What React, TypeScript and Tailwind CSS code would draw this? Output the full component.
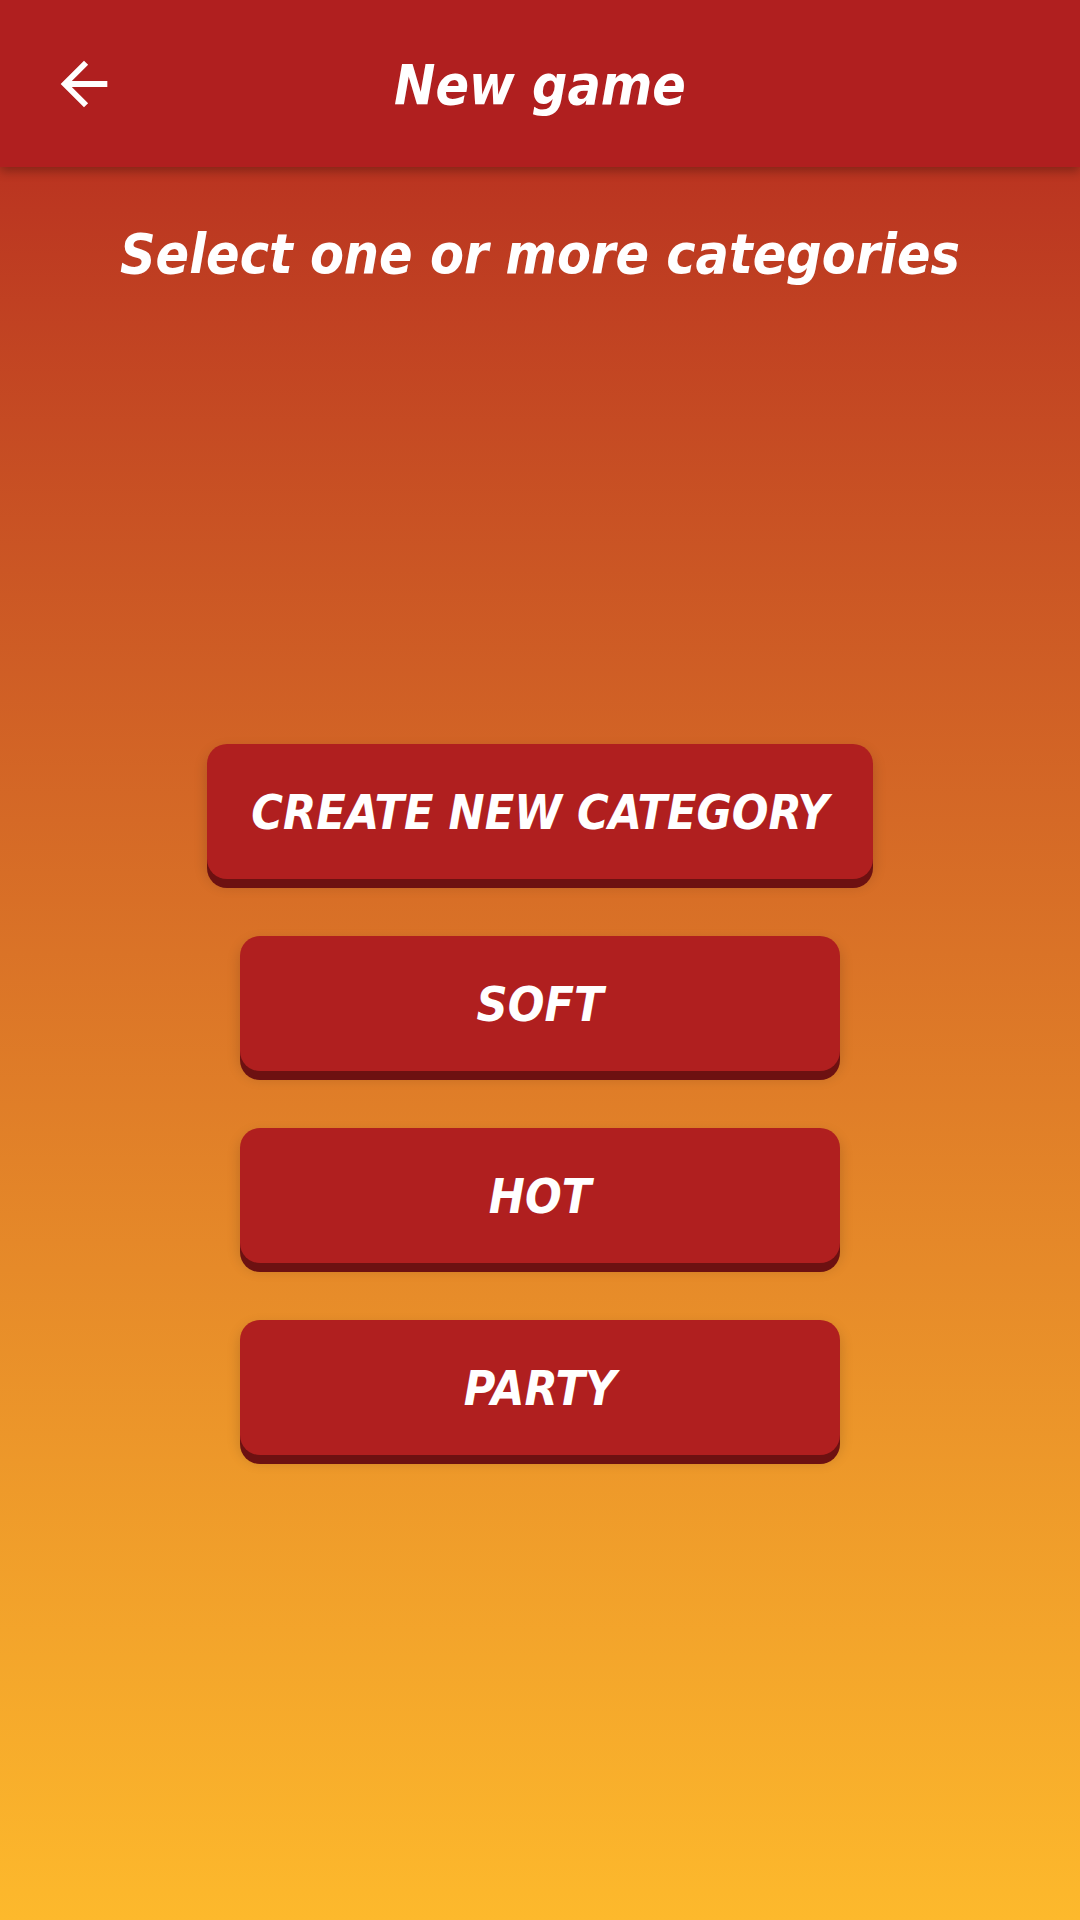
import React from "react";

const font = { fontFamily: '"DejaVu Sans Condensed", "DejaVu Sans", sans-serif' };

const categories = ["SOFT", "HOT", "PARTY"];

function BackIcon() {
	return (
		<svg viewBox="0 0 24 24" className="w-[70px] h-[70px]" fill="white">
			<path d="M20 11H7.83l5.59-5.59L12 4l-8 8 8 8 1.41-1.41L7.83 13H20v-2z" />
		</svg>
	);
}

function CategoryButton({ label, wide }: { label: string; wide?: boolean }) {
	return (
		<button
			className={`${wide ? "w-[666px]" : "w-[600px]"} h-[135px] mb-[9px] rounded-[20px] bg-[#b01f1f] text-white italic font-bold text-[48px] flex items-center justify-center shadow-[0_9px_0_#6d1111,0_6px_14px_rgba(0,0,0,0.18)]`}
			style={font}
		>
			{label}
		</button>
	);
}

export default function App() {
	return (
		<div className="w-[1080px] h-[1920px] flex flex-col bg-gradient-to-b from-[#b3221f] to-[#fdb92c] overflow-hidden" style={font}>
			<header className="relative h-[167px] shrink-0 bg-[#b01f1f] flex items-center justify-center shadow-[0_4px_10px_rgba(0,0,0,0.3)] z-10">
				<button className="absolute left-[49px] top-[49px]">
					<BackIcon />
				</button>
				<h1 className="mt-[4px] text-white italic font-bold text-[55px] leading-none">New game</h1>
			</header>
			<main className="flex flex-col items-center">
				<h2 className="mt-[52px] text-white italic font-bold text-[55px] leading-[70px]">
					Select one or more categories
				</h2>
				<div className="mt-[455px] flex flex-col items-center gap-[48px]">
					<CategoryButton label="CREATE NEW CATEGORY" wide />
					{categories.map((c) => (
						<CategoryButton key={c} label={c} />
					))}
				</div>
			</main>
		</div>
	);
}
